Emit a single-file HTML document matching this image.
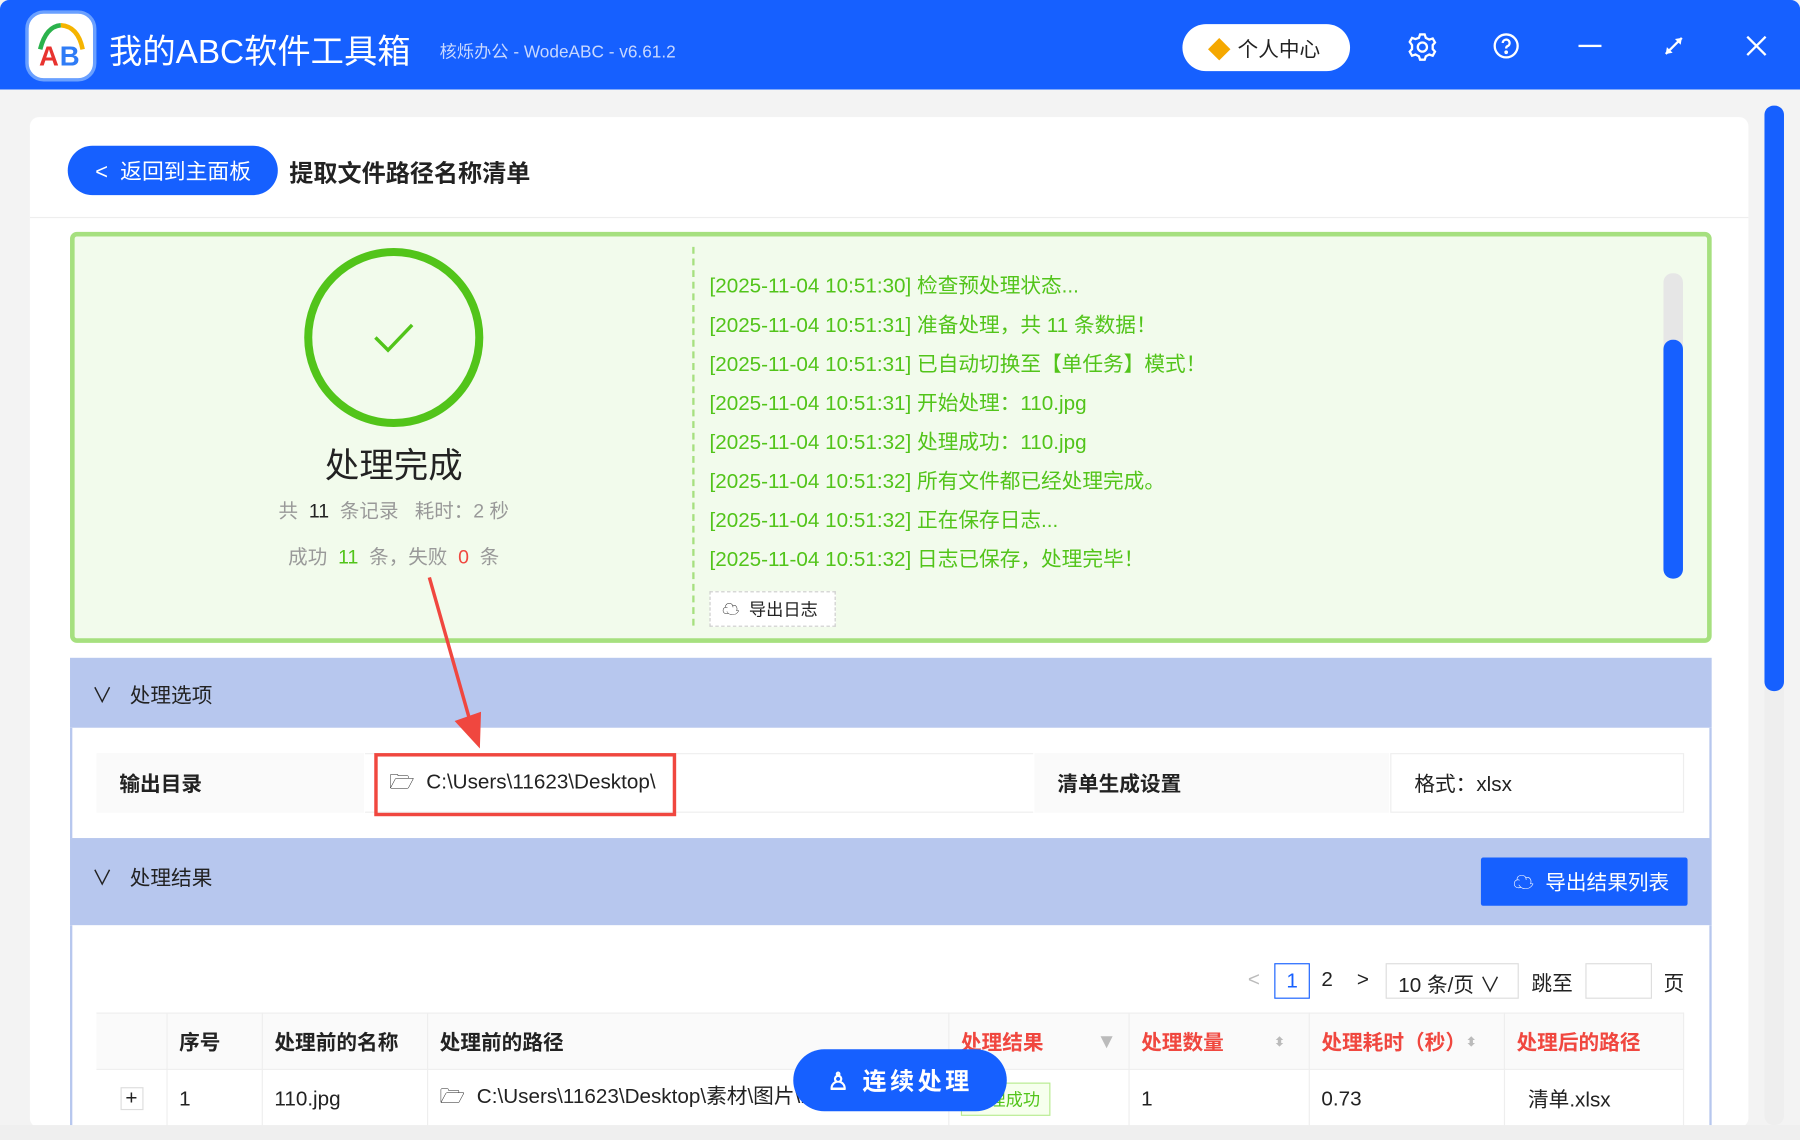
<!DOCTYPE html>
<html><head><meta charset="utf-8"><style>
*{margin:0;padding:0;box-sizing:border-box}
html,body{width:1800px;height:1140px;overflow:hidden;background:#ececec}
#w{width:1568px;height:993px;transform:scale(1.148);transform-origin:0 0;position:relative;font-family:"Liberation Sans","Noto Sans CJK SC",sans-serif;color:#222;background:#f3f3f3}
.a{position:absolute}
.top{left:0;top:0;width:1568px;height:78px;background:#1660ff;border-radius:8px 8px 0 0}
.log{left:618px;font-size:18px;color:#52c41a;white-space:nowrap}
.hdr{background:#b7c7ee;left:61px;width:1430px}
.cell{top:656px;height:52px;font-size:18px;display:flex;align-items:center;padding-left:20px}
.th{top:882px;height:50px;font-size:18px;font-weight:bold;display:flex;align-items:center;padding-left:10px;border-right:1px solid #eee}
.td{top:932px;height:50px;font-size:18px;display:flex;align-items:center;padding-left:10px;border-right:1px solid #eee}
.red{color:#f0473f}
</style></head><body><div id="w">
<div class="a top"></div>
<div class="a" style="left:22px;top:9px;width:62px;height:62px;border-radius:16px;background:#fff;border:3px solid #6aa0ff"></div>
<svg class="a" style="left:26px;top:13px" width="54" height="54" viewBox="0 0 54 54"><path d="M9 30 Q14 10 27 9" stroke="#2bb24c" stroke-width="4" fill="none"/><path d="M27 9 Q42 10 46 30" stroke="#f5b400" stroke-width="4" fill="none"/><text x="8" y="44" font-size="24" font-weight="bold" fill="#e8332f" font-family="Liberation Sans">A</text><text x="26" y="44" font-size="24" font-weight="bold" fill="#2f7cf6" font-family="Liberation Sans">B</text></svg>
<div class="a" style="left:95px;top:22px;font-size:29px;color:#fff;white-space:nowrap">我的ABC软件工具箱</div>
<div class="a" style="left:383px;top:34px;font-size:15px;color:#c8d8ff;white-space:nowrap">核烁办公 - WodeABC - v6.61.2</div>
<div class="a" style="left:1030px;top:21px;width:146px;height:41px;border-radius:21px;background:#fff;font-size:18px;display:flex;align-items:center;padding-left:22px"><span style="color:#f5a800;font-size:20px;margin-right:6px">◆</span>个人中心</div>
<svg class="a" style="left:1226px;top:28px" width="26" height="26" viewBox="0 0 26 26" fill="none" stroke="#fff" stroke-width="2"><circle cx="13" cy="13" r="4"/><path d="M11 2h4l1 3 3 1.5 3-1 2 3.5-2 2.3v3.4l2 2.3-2 3.5-3-1L16 21l-1 3h-4l-1-3-3-1.5-3 1-2-3.5 2-2.3v-3.4L2 8.5l2-3.5 3 1L10 5z"/></svg>
<svg class="a" style="left:1300px;top:28px" width="24" height="24" viewBox="0 0 24 24" fill="none" stroke="#fff" stroke-width="2"><circle cx="12" cy="12" r="10"/><path d="M9 9.5a3 3 0 1 1 4 2.8c-.8.3-1 1-1 2"/><circle cx="12" cy="17.5" r=".6" fill="#fff"/></svg>
<div class="a" style="left:1375px;top:39px;width:20px;height:2px;background:#fff"></div>
<svg class="a" style="left:1448px;top:30px" width="20" height="20" viewBox="0 0 20 20" stroke="#fff" stroke-width="2" fill="#fff"><path d="M3 17L17 3"/><path d="M17 3l-6 1 5 5z" stroke="none"/><path d="M3 17l6-1-5-5z" stroke="none"/></svg>
<svg class="a" style="left:1521px;top:31px" width="18" height="18" stroke="#fff" stroke-width="2"><path d="M1 1L17 17M17 1L1 17"/></svg>
<div class="a" style="left:26px;top:102px;width:1497px;height:880px;background:#fff;border-radius:8px"></div>
<div class="a" style="left:26px;top:189px;width:1497px;height:1px;background:#eee"></div>
<div class="a" style="left:1537px;top:92px;width:17px;height:888px;background:#eee;border-radius:8px"></div>
<div class="a" style="left:1537px;top:92px;width:17px;height:510px;background:#1660ff;border-radius:8px"></div>
<div class="a" style="left:59px;top:127px;width:183px;height:43px;border-radius:22px;background:#1660ff;color:#fff;font-size:19px;display:flex;align-items:center;padding-left:24px">&lt;&nbsp;&nbsp;返回到主面板</div>
<div class="a" style="left:252px;top:135px;font-size:21px;font-weight:bold">提取文件路径名称清单</div>
<div class="a" style="left:61px;top:202px;width:1430px;height:358px;background:#f2fbec;border:4px solid #a6e07f;border-radius:6px"></div>
<div class="a" style="left:265px;top:216px;width:156px;height:156px;border-radius:50%;border:7px solid #52c41a"></div>
<svg class="a" style="left:325px;top:280px" width="36" height="30"><path d="M2 14l11 11L34 3" stroke="#52c41a" stroke-width="3" fill="none"/></svg>
<div class="a" style="left:0;top:381px;width:686px;text-align:center;font-size:30px">处理完成</div>
<div class="a" style="left:0;top:431px;width:686px;text-align:center;font-size:17px;color:#999">共 <b style="color:#222;font-weight:normal">&nbsp;11&nbsp;</b> 条记录 &nbsp; 耗时：2 秒</div>
<div class="a" style="left:0;top:471px;width:686px;text-align:center;font-size:17px;color:#999">成功 <span style="color:#52c41a">&nbsp;11&nbsp;</span> 条，失败 <span style="color:#f0473f">&nbsp;0&nbsp;</span> 条</div>
<div class="a" style="left:603px;top:215px;height:330px;border-left:2px dashed #a6e07f"></div>
<div class="a log" style="top:235px">[2025-11-04 10:51:30] 检查预处理状态...</div>
<div class="a log" style="top:269px">[2025-11-04 10:51:31] 准备处理，共 11 条数据！</div>
<div class="a log" style="top:303px">[2025-11-04 10:51:31] 已自动切换至【单任务】模式！</div>
<div class="a log" style="top:337px">[2025-11-04 10:51:31] 开始处理：110.jpg</div>
<div class="a log" style="top:371px">[2025-11-04 10:51:32] 处理成功：110.jpg</div>
<div class="a log" style="top:405px">[2025-11-04 10:51:32] 所有文件都已经处理完成。</div>
<div class="a log" style="top:439px">[2025-11-04 10:51:32] 正在保存日志...</div>
<div class="a log" style="top:473px">[2025-11-04 10:51:32] 日志已保存，处理完毕！</div>
<div class="a" style="left:618px;top:515px;width:110px;height:31px;border:1px dashed #ccc;background:#fff;font-size:15px;display:flex;align-items:center;padding-left:10px">☁&nbsp; 导出日志</div>
<div class="a" style="left:1449px;top:238px;width:17px;height:266px;background:#e6e6e6;border-radius:8px"></div>
<div class="a" style="left:1449px;top:296px;width:17px;height:208px;background:#1660ff;border-radius:8px"></div>
<div class="a hdr" style="top:573px;height:61px"></div>
<div class="a" style="left:80px;top:592px;font-size:18px">∨&nbsp;&nbsp; 处理选项</div>
<div class="a" style="left:61px;top:634px;width:1430px;height:96px;background:#fff;border-left:2px solid #b7c7ee;border-right:2px solid #b7c7ee"></div>
<div class="a cell" style="left:84px;width:233px;background:#fafafa;font-weight:bold">输出目录</div>
<div class="a cell" style="left:318px;width:582px;border-top:1px solid #eee;border-bottom:1px solid #eee"></div>
<div class="a cell" style="left:901px;width:309px;background:#fafafa;font-weight:bold">清单生成设置</div>
<div class="a cell" style="left:1211px;width:256px;border:1px solid #eee">格式：xlsx</div>
<div class="a" style="left:326px;top:656px;width:263px;height:55px;border:3px solid #f0473f;font-size:18px;display:flex;align-items:center;padding-left:10px">🗁&nbsp; C:\Users\11623\Desktop\</div>
<div class="a hdr" style="top:730px;height:76px"></div>
<div class="a" style="left:80px;top:751px;font-size:18px">∨&nbsp;&nbsp; 处理结果</div>
<div class="a" style="left:1290px;top:747px;width:180px;height:42px;background:#1660ff;color:#fff;font-size:18px;display:flex;align-items:center;padding-left:28px;border-radius:2px">☁&nbsp; 导出结果列表</div>
<div class="a" style="left:61px;top:806px;width:1430px;height:180px;background:#fff;border-left:2px solid #b7c7ee;border-right:2px solid #b7c7ee"></div>
<div class="a" style="left:1087px;top:843px;font-size:18px;color:#bbb">&lt;</div>
<div class="a" style="left:1110px;top:839px;width:31px;height:31px;border:1px solid #1660ff;color:#1660ff;font-size:18px;text-align:center;line-height:29px">1</div>
<div class="a" style="left:1151px;top:843px;font-size:18px">2</div>
<div class="a" style="left:1182px;top:843px;font-size:18px">&gt;</div>
<div class="a" style="left:1207px;top:839px;width:116px;height:31px;border:1px solid #ddd;font-size:18px;padding:4px 10px">10 条/页 ∨</div>
<div class="a" style="left:1334px;top:843px;font-size:18px">跳至</div>
<div class="a" style="left:1381px;top:839px;width:58px;height:31px;border:1px solid #ddd"></div>
<div class="a" style="left:1449px;top:843px;font-size:18px">页</div>
<div class="a" style="left:84px;top:882px;width:1383px;height:50px;background:#fafafa;border-top:1px solid #eee;border-bottom:1px solid #eee"></div>
<div class="a th" style="left:84px;width:62px"></div>
<div class="a th" style="left:146px;width:83px">序号</div>
<div class="a th" style="left:229px;width:144px">处理前的名称</div>
<div class="a th" style="left:373px;width:454px">处理前的路径</div>
<div class="a th red" style="left:827px;width:157px">处理结果<span style="color:#bbb;margin-left:46px">▼</span></div>
<div class="a th red" style="left:984px;width:157px">处理数量<span style="color:#bbb;margin-left:44px;font-size:11px">⬍</span></div>
<div class="a th red" style="left:1141px;width:170px">处理耗时（秒）<span style="color:#bbb;font-size:11px">⬍</span></div>
<div class="a th red" style="left:1311px;width:156px">处理后的路径</div>
<div class="a td" style="left:84px;width:62px;justify-content:center;padding:0"><span style="border:1px solid #ddd;width:20px;height:20px;line-height:17px;text-align:center">+</span></div>
<div class="a td" style="left:146px;width:83px">1</div>
<div class="a td" style="left:229px;width:144px">110.jpg</div>
<div class="a td" style="left:373px;width:454px">🗁&nbsp; C:\Users\11623\Desktop\素材\图片\110.jpg</div>
<div class="a td" style="left:827px;width:157px"><span style="border:1px solid #b7eb8f;background:#f6ffed;color:#52c41a;font-size:15px;padding:3px 8px">处理成功</span></div>
<div class="a td" style="left:984px;width:157px">1</div>
<div class="a td" style="left:1141px;width:170px">0.73</div>
<div class="a td" style="left:1311px;width:156px;padding-left:20px">清单.xlsx</div>
<div class="a" style="left:691px;top:914px;width:186px;height:54px;border-radius:27px;background:#1660ff;color:#fff;font-size:21px;font-weight:bold;display:flex;align-items:center;justify-content:center;letter-spacing:3px">♙ 连续处理</div>
<div class="a" style="left:0;top:980px;width:1568px;height:13px;background:#efefef"></div>
<svg class="a" style="left:0;top:0" width="1568" height="993"><path d="M374 503L410 630" stroke="#f0473f" stroke-width="3"/><path d="M396 628l22 24 1-32z" fill="#f0473f"/></svg>
</div></body></html>
